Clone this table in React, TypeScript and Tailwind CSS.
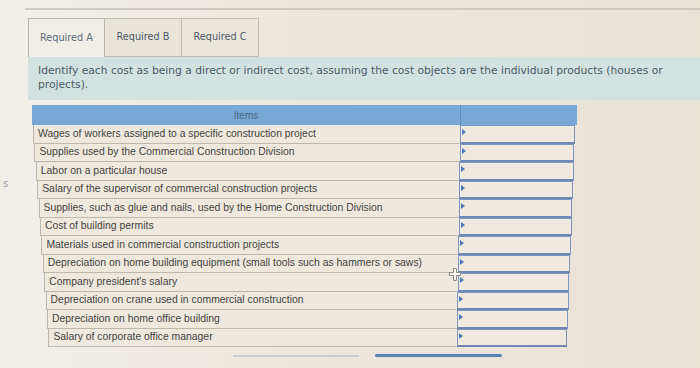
import React from "react";

const items = [
  "Wages of workers assigned to a specific construction project",
  "Supplies used by the Commercial Construction Division",
  "Labor on a particular house",
  "Salary of the supervisor of commercial construction projects",
  "Supplies, such as glue and nails, used by the Home Construction Division",
  "Cost of building permits",
  "Materials used in commercial construction projects",
  "Depreciation on home building equipment (small tools such as hammers or saws)",
  "Company president's salary",
  "Depreciation on crane used in commercial construction",
  "Depreciation on home office building",
  "Salary of corporate office manager",
];

function Row({ text, i }: { text: string; i: number }) {
  const left = 33 + i * 1.4;
  const divider = 460 - i * 0.3;
  const right = 575 - i * 0.7;
  return (
    <div className="flex h-[18.5px]" style={{ marginLeft: left }}>
      <div
        className="h-full border-l border-b border-[#bdb8ae] bg-[#eee8de] pl-[4px] flex items-center text-[10.4px] text-[#444] whitespace-nowrap overflow-hidden"
        style={{ width: divider - left }}
      >
        {text}
      </div>
      <div
        className="relative h-full border border-[#7f97bc] border-b-[2px] border-b-[#7189b0] bg-[#efe9df]"
        style={{ width: right - divider }}
      >
        <div className="absolute left-[1px] top-[3px] w-0 h-0 border-y-[3px] border-y-transparent border-l-[4px] border-l-[#4d79b6]" />
      </div>
    </div>
  );
}

export default function App() {
  return (
    <div
      className="relative w-[700px] h-[368px] overflow-hidden bg-gradient-to-r from-[#f2efea] via-[#ece6dc] to-[#e8e2d7]"
      style={{ fontFamily: "'DejaVu Sans', Verdana, sans-serif" }}
    >
      <div className="pt-[8px]">
        <div className="ml-[25px] h-[2px] bg-[#cfcac1]" />
      </div>
      <div className="flex ml-[28px] mt-[8px] text-[9.7px] text-[#5d6b7c]">
        <div className="w-[77px] h-[39px] border border-b-0 border-[#bcb7ae] bg-[#f1eee8] flex items-center justify-center">
          Required A
        </div>
        <div className="w-[77px] h-[39px] border border-l-0 border-[#c2bdb4] bg-[#e9e4da] flex items-center justify-center text-[#4d5a6a]">
          Required B
        </div>
        <div className="w-[77px] h-[39px] border border-l-0 border-[#c2bdb4] bg-[#ebe6dc] flex items-center justify-center text-[#4d5a6a]">
          Required C
        </div>
      </div>
      <div className="ml-[28px] h-[43px] bg-[#d3e2e1] pl-[10px] pt-[7px] text-[10.7px] leading-[14px] text-[#4f5a65]">
        Identify each cost as being a direct or indirect cost, assuming the cost objects are the individual products (houses or
        <br />
        projects).
      </div>
      <div className="mt-[5px]" style={{ fontFamily: "'Liberation Sans', Arial, sans-serif" }}>
        <div className="flex h-[20px] ml-[32px] w-[545px] bg-[#78a8d6]">
          <div className="w-[429px] h-full flex items-center justify-center text-[10px] text-[#4e6680] border-r border-[#5f8cbc]">
            Items
          </div>
          <div className="w-[116px] h-full" />
        </div>
        {items.map((t, i) => (
          <Row key={i} text={t} i={i} />
        ))}
        <div className="flex mt-[7px] items-center">
          <div className="ml-[233px] w-[126px] h-[2px] bg-[#c9cdd0]" />
          <div className="ml-[16px] w-[127px] h-[3px] rounded-full bg-[#5b80b2]" />
        </div>
      </div>
      <div className="absolute left-[3px] top-[176px] text-[10px] text-[#9aa0a6]">s</div>
      <svg className="absolute left-[449px] top-[268px]" width="12" height="13" viewBox="0 0 12 13">
        <path
          d="M4.5 0.5 H7.5 V4.5 H11.5 V7.5 H7.5 V12.5 H4.5 V7.5 H0.5 V4.5 H4.5 Z"
          fill="#f7f5f0"
          stroke="#8a8a8a"
          strokeWidth="1"
        />
      </svg>
    </div>
  );
}
